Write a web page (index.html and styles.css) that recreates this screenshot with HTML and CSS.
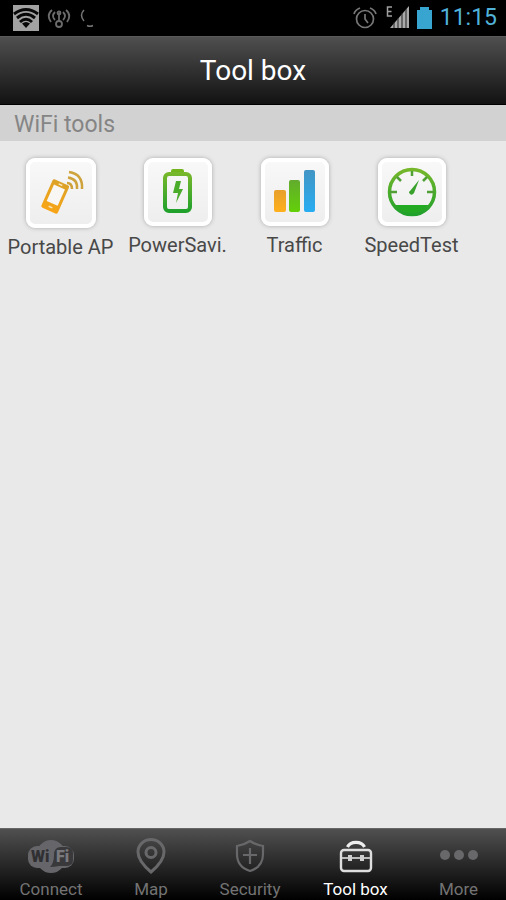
FILE: index.html
```html
<!DOCTYPE html>
<html lang="en">
<head>
<meta charset="utf-8">
<meta name="viewport" content="width=device-width, initial-scale=1">
<title>Tool box</title>
<link rel="stylesheet" href="styles.css">
</head>
<body>
<div class="status">
  <div class="status-group">
    <svg width="26" height="26" viewBox="0 0 26 26" aria-hidden="true">
      <rect width="26" height="26" fill="#a2a2a2"/>
      <g fill="none" stroke="#080808" stroke-width="3">
        <path d="M1 9Q13 0 25 9"/><path d="M4 13Q13 5.500 22 13"/><path d="M7 17Q13 11.500 19 17"/>
      </g>
      <path d="M9 18.500Q13 15.500 17 18.500L13 23Z" fill="#080808"/>
    </svg>
    <svg width="24" height="24" viewBox="0 0 24 24" fill="none" stroke="#6c6c6c" stroke-width="1.800" aria-hidden="true">
      <path d="M5 4Q-1 9 4 16M8 6Q4 10 8 14M19 4Q25 9 20 16M16 6Q20 10 16 14M12 15V7"/>
      <circle cx="12" cy="7" r="1.500"/><circle cx="12" cy="18" r="3"/>
    </svg>
    <svg width="20" height="24" viewBox="0 0 20 24" fill="none" stroke="#747474" stroke-width="1.500" aria-hidden="true">
      <path d="M5 4Q0 9 5 15M8 19.500Q11 21 14 19.500"/>
    </svg>
  </div>
  <div class="status-group">
    <svg width="24" height="24" viewBox="0 0 24 24" fill="none" stroke="#777" stroke-width="1.700" aria-hidden="true">
      <circle cx="12" cy="13" r="8.500"/><path d="M12 8V13L15 17M1 8Q2 4 7 2M23 8Q22 4 17 2"/>
    </svg>
    <svg width="24" height="24" viewBox="0 0 24 24" aria-hidden="true">
      <path d="M7 1H2.500V10H7M2.500 5.500H6.500" fill="none" stroke="#a0a0a0" stroke-width="1.500"/>
      <path d="M5 22L24 0V22Z" fill="#aaa"/>
      <path d="M9 16V22M13 12V22M17 7V22M21 3V22" stroke="#222" stroke-width="1"/>
    </svg>
    <svg width="15" height="22" viewBox="0 0 15 22" aria-hidden="true">
      <path d="M0 3H3V0H12V3H15V22H0Z" fill="#38a4d0"/>
    </svg>
    <time class="clock">11:15</time>
  </div>
</div>
<header class="header"><h1>Tool box</h1></header>
<main class="main">
  <h2 class="section-title">WiFi tools</h2>
  <div class="tools">
    <button class="tool" type="button">
      <span class="tile tile-large">
        <svg width="60" height="60" viewBox="0 0 60 60" aria-hidden="true">
          <defs><linearGradient id="amber" x1="0" y1="0" x2="0" y2="1"><stop stop-color="#dca226"/><stop offset="1" stop-color="#f8a516"/></linearGradient></defs>
          <g transform="rotate(24 24 34)">
            <rect x="15" y="18" width="18" height="31" rx="2" fill="url(#amber)"/>
            <rect x="18" y="23" width="12" height="18" fill="#f8f7f3"/>
            <path d="M22 20.500H26M22 45H26" stroke="#f8e4b8" stroke-width="1.500"/>
          </g>
          <g fill="none" stroke="#cfa33c" stroke-width="2.500">
            <path d="M38 9Q52 11 51 26"/><path d="M37 14.500Q47 16 46 26"/><path d="M36 20Q41 20 41 26"/>
          </g>
        </svg>
      </span>
      <span>Portable AP</span>
    </button>
    <button class="tool" type="button">
      <span class="tile">
        <svg width="60" height="60" viewBox="0 0 60 60" aria-hidden="true">
          <defs><linearGradient id="green" x1="0" y1="0" x2="0" y2="1"><stop stop-color="#76b72b"/><stop offset="1" stop-color="#20a12b"/></linearGradient></defs>
          <path d="M23 12V9Q23 7 25 7H34Q36 7 36 9V12Z" fill="#72b51c"/>
          <rect x="17" y="12" width="25" height="37" rx="4" fill="none" stroke="url(#green)" stroke-width="4"/>
          <path d="M28 19H33L31 27H35L28 41L30 31H25Z" fill="#4bab2b"/>
        </svg>
      </span>
      <span>PowerSavi.</span>
    </button>
    <button class="tool" type="button">
      <span class="tile">
        <svg width="60" height="60" viewBox="0 0 60 60" aria-hidden="true">
          <defs>
            <linearGradient id="orange-bar" x1="0" y1="0" x2="0" y2="1"><stop stop-color="#e8a02c"/><stop offset="1" stop-color="#ffb01c"/></linearGradient>
            <linearGradient id="green-bar" x1="0" y1="0" x2="0" y2="1"><stop stop-color="#62ac2e"/><stop offset="1" stop-color="#63d008"/></linearGradient>
            <linearGradient id="blue-bar" x1="0" y1="0" x2="0" y2="1"><stop stop-color="#4295c4"/><stop offset="1" stop-color="#27adf2"/></linearGradient>
          </defs>
          <rect x="9" y="28" width="12" height="22" rx="2" fill="url(#orange-bar)"/>
          <rect x="24" y="18" width="11" height="32" rx="2" fill="url(#green-bar)"/>
          <rect x="39" y="8" width="11" height="42" rx="2" fill="url(#blue-bar)"/>
        </svg>
      </span>
      <span>Traffic</span>
    </button>
    <button class="tool" type="button">
      <span class="tile">
        <svg width="60" height="60" viewBox="0 0 60 60" aria-hidden="true">
          <path d="M10 43H50A24 24 0 0 1 10 43Z" fill="#24aa22"/>
          <circle cx="30" cy="30" r="22.500" fill="none" stroke="url(#green)" stroke-width="3.500"/>
          <path d="M30 9V14M8 30H15M45 30H52M15 15L19 19M45 15L41 19" stroke="#51a035" stroke-width="2.500"/>
          <path d="M37 18L32 31Q30 34 28 32T28 29Z" fill="#39a22c"/>
        </svg>
      </span>
      <span>SpeedTest</span>
    </button>
  </div>
</main>
<nav class="nav" aria-label="Main">
  <a class="nav-item" href="#connect">
    <svg width="48" height="36" viewBox="0 0 48 36" aria-hidden="true">
      <ellipse cx="24" cy="18.500" rx="15" ry="16.500" fill="#66666a"/>
      <rect x="1" y="8" width="46" height="22" rx="9" fill="#66666a"/>
      <path d="M23 29Q27 25 27 17Q27 9 34 9H39Q46 9 46 15V22Q46 28 39 28H32Q28 29 23 29Z" fill="#39393c"/>
      <text class="wifi-mark" x="4" y="24" fill="#303033">Wi</text>
      <text class="wifi-mark" x="29" y="24" fill="#7a7a7e">Fi</text>
    </svg>
    <span>Connect</span>
  </a>
  <a class="nav-item" href="#map">
    <svg width="36" height="36" viewBox="0 0 36 36" fill="none" stroke="#68686a" stroke-width="3" aria-hidden="true">
      <path d="M18 34Q5 23 5 14A13 12.500 0 0 1 31 14Q31 23 18 34Z"/><circle cx="18" cy="14.500" r="5"/>
    </svg>
    <span>Map</span>
  </a>
  <a class="nav-item" href="#security">
    <svg width="36" height="36" viewBox="0 0 36 36" fill="none" stroke="#68686a" stroke-width="2.200" aria-hidden="true">
      <path d="M18 3Q12 7 5 8V16Q5 29 18 33Q31 29 31 16V8Q24 7 18 3Z"/><path d="M18 10V26M11 17H25"/>
    </svg>
    <span>Security</span>
  </a>
  <a class="nav-item active" href="#toolbox" aria-current="page">
    <svg width="36" height="36" viewBox="0 0 36 36" fill="none" aria-hidden="true">
      <path d="M9.500 9A9 7 0 0 1 26.500 9" stroke="#eee" stroke-width="3.200"/>
      <rect x="3" y="12" width="30" height="21" rx="3" stroke="#dedede" stroke-width="2.400"/>
      <path d="M4 20H32" stroke="#bcbcbc" stroke-width="2"/>
      <path d="M12 17V23M24 17V23" stroke="#cfcfcf" stroke-width="4"/>
    </svg>
    <span>Tool box</span>
  </a>
  <a class="nav-item" href="#more">
    <svg width="38" height="36" viewBox="0 0 38 36" fill="#68686a" aria-hidden="true">
      <circle cx="5" cy="17" r="5"/><circle cx="19" cy="17" r="5"/><circle cx="33" cy="17" r="5"/>
    </svg>
    <span>More</span>
  </a>
</nav>
</body>
</html>
```
FILE: styles.css
```css
* {
  box-sizing: border-box;
}

body {
  margin: 0;
  min-height: 100vh;
  display: flex;
  flex-direction: column;
  background: #e9e9e9;
  font-family: Roboto, "Liberation Sans", sans-serif;
}

h1,
h2 {
  margin: 0;
  font-weight: 400;
}

svg {
  display: block;
  flex: none;
}

.status {
  display: flex;
  justify-content: space-between;
  align-items: center;
  height: 36px;
  padding: 0 9px 0 13px;
  background: #000;
}

.status-group {
  display: flex;
  align-items: center;
  gap: 8px;
}

.clock {
  color: #51b2d9;
  font-size: 23px;
  line-height: 36px;
}

.header {
  display: flex;
  justify-content: center;
  align-items: center;
  height: 69px;
  border-top: 1px solid #5a5a5a;
  border-bottom: 1px solid #000;
  background: linear-gradient(#4f4f4f, #121212);
  color: #fff;
}

.header h1 {
  font-size: 28px;
  line-height: 36px;
}

.main {
  flex: 1;
}

.section-title {
  padding: 2px 14px 0;
  height: 36px;
  background: #d2d2d2;
  color: #858585;
  font-size: 23px;
  line-height: 36px;
}

.tools {
  display: grid;
  grid-template-columns: repeat(4, 117fr) 36fr;
  padding: 17px 0 0 2px;
}

.tool {
  display: flex;
  flex-direction: column;
  align-items: center;
  gap: 5px;
  padding: 0;
  border: 0;
  background: none;
  color: #484848;
  font: inherit;
  font-size: 20px;
  line-height: 28px;
  white-space: nowrap;
}

.tile {
  display: flex;
  justify-content: center;
  align-items: center;
  width: 68px;
  height: 68px;
  border: 4px solid #fff;
  border-radius: 9px;
  background: linear-gradient(#f8f8f8, #eee);
  box-shadow: 0 0 4px #aaa;
}

.tile-large {
  width: 70px;
  height: 70px;
}

.nav {
  display: grid;
  grid-template-columns: 102fr 98fr 100fr 111fr 95fr;
  height: 72px;
  border-top: 1px solid #666;
  background: linear-gradient(#505050, #000);
}

.nav-item {
  display: flex;
  flex-direction: column;
  align-items: center;
  gap: 5px;
  padding-top: 9px;
  color: #737373;
  font-size: 17px;
  line-height: 20px;
  text-decoration: none;
}

.active {
  color: #fff;
}

.wifi-mark {
  font-size: 16px;
  font-weight: 900;
}
```
